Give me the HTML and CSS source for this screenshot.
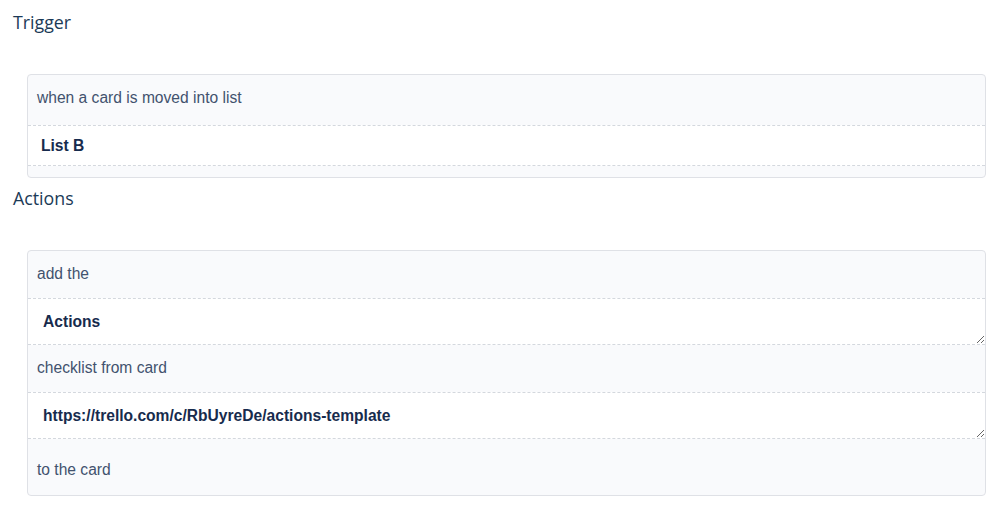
FILE: index.html
```html
<!DOCTYPE html>
<html lang="en">
  <head>
    <meta charset="UTF-8" />
    <meta name="viewport" content="width=device-width, initial-scale=1.0" />
    <title>Rule</title>
    <link rel="stylesheet" href="styles.css">
  </head>
  <body>
    <div class="container">
      <!-- Trigger -->
      <h3 class="section-title">Trigger</h3>
      <div class="card card-trigger">
        <div class="row row-first">when a card is moved into list</div>
        <input class="field field-input" type="text" value="List B" />
      </div>

      <!-- Actions -->
      <h3 class="section-title">Actions</h3>
      <div class="card">
        <div class="row">add the</div>
        <textarea class="field field-area">Actions</textarea>
        <div class="row">checklist from card</div>
        <textarea class="field field-area">https://trello.com/c/RbUyreDe/actions-template</textarea>
        <div class="row row-last">to the card</div>
      </div>
    </div>
  </body>
</html>
```

FILE: styles.css
```css
body {
  margin: 0;
  font-family: "Liberation Sans", Arial, sans-serif;
  background: #fff;
}
.container {
  padding: 2px 13px 0 13px;
}
.section-title {
  font-family: "Open Sans", sans-serif;
  font-weight: 400;
  font-size: 17.8px;
  line-height: 26px;
  color: #1b3a57;
  margin: 7px 0 39px 0;
}
.card {
  margin-left: 14px;
  background: #f9fafc;
  border: 1px solid #dfe1e6;
  border-radius: 4px;
  display: flex;
  flex-direction: column;
}
.card-trigger {
  padding-bottom: 11px;
}
.row {
  font-size: 15.6px;
  line-height: 20px;
  color: #42526e;
  padding: 13px 9px 14px 9px;
}
.row-first {
  padding-bottom: 17px;
}
.row-last {
  padding: 21px 9px 15px 9px;
}
.field {
  display: block;
  box-sizing: border-box;
  width: 100%;
  margin: 0;
  background: #fff;
  border: none;
  border-top: 1px dashed #d4d8de;
  border-bottom: 1px dashed #d4d8de;
  font-family: "Liberation Sans", Arial, sans-serif;
  font-size: 15.6px;
  font-weight: 700;
  color: #172b4d;
  outline: none;
}
.field-input {
  height: 41px;
  padding: 0 13px;
}
.field-area {
  height: 47px;
  padding: 13px 15px;
  line-height: 20px;
  resize: vertical;
  overflow: hidden;
}
```
